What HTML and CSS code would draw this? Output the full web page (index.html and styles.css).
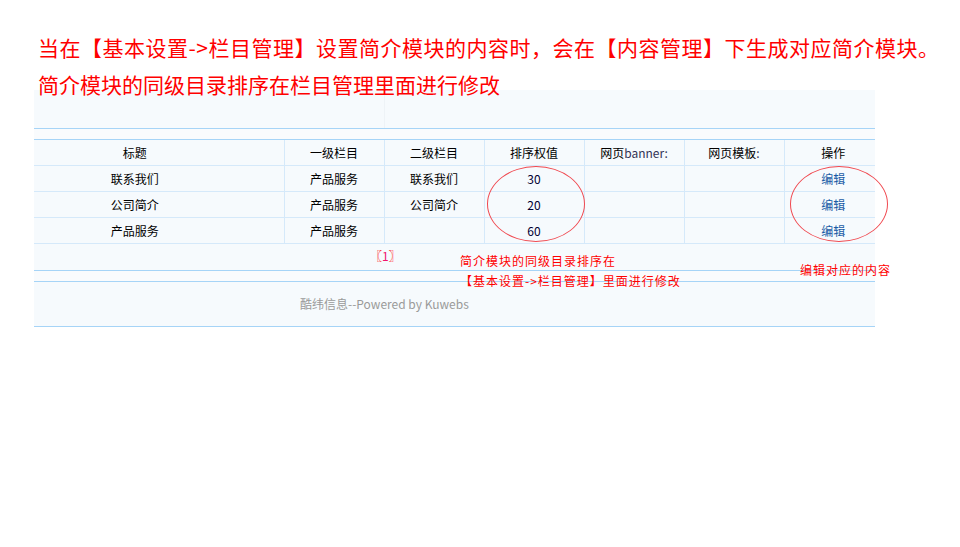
FILE: index.html
```html
<!DOCTYPE html>
<html lang="zh-CN">
<head>
<meta charset="utf-8">
<title>简介模块</title>
<link rel="stylesheet" href="styles.css">
</head>
<body>
<div class="note">
  <p>当在【基本设置-&gt;栏目管理】设置简介模块的内容时，会在【内容管理】下生成对应简介模块。</p>
  <p>简介模块的同级目录排序在栏目管理里面进行修改</p>
</div>

<div class="panel">
  <div class="panel-top">
    <div class="pt-left"></div>
    <div class="pt-right"></div>
  </div>
  <div class="gap"></div>
  <table class="grid">
    <colgroup>
      <col style="width:250px"><col style="width:100px"><col style="width:100px"><col style="width:100px"><col style="width:100px"><col style="width:100px"><col style="width:91px">
    </colgroup>
    <tr class="head">
      <td>标题</td><td>一级栏目</td><td>二级栏目</td><td>排序权值</td><td>网页<span class="en">banner:</span></td><td>网页模板<span class="en">:</span></td><td>操作</td>
    </tr>
    <tr>
      <td>联系我们</td><td>产品服务</td><td>联系我们</td><td class="num">30</td><td></td><td></td><td><a class="edit" href="#">编辑</a></td>
    </tr>
    <tr>
      <td>公司简介</td><td>产品服务</td><td>公司简介</td><td class="num">20</td><td></td><td></td><td><a class="edit" href="#">编辑</a></td>
    </tr>
    <tr>
      <td>产品服务</td><td>产品服务</td><td></td><td class="num">60</td><td></td><td></td><td><a class="edit" href="#">编辑</a></td>
    </tr>
    <tr class="pager">
      <td colspan="7"><span class="pg"><span class="br">〖</span>1<span class="br">〗</span></span></td>
    </tr>
  </table>
  <div class="gap"></div>
  <div class="footer">酷纬信息--Powered by Kuwebs</div>

  <span class="ring ring-sort"></span>
  <span class="ring ring-edit"></span>
  <div class="tip tip-sort">简介模块的同级目录排序在<br>【基本设置-&gt;栏目管理】里面进行修改</div>
  <div class="tip tip-edit">编辑对应的内容</div>
</div>
</body>
</html>
```

FILE: styles.css
```css
html, body {
  margin: 0;
  padding: 0;
  background: #fff;
}

body {
  font-family: "Noto Sans CJK SC", "DejaVu Sans", sans-serif;
  font-size: 12px;
  color: #000;
}

/* red note above the panel */
.note {
  position: relative;
  z-index: 2;
  height: 90px;
  padding: 29px 0 0 38px;
  box-sizing: border-box;
  color: #f00;
  font-size: 21px;
  line-height: 37px;
}

.note p {
  margin: 0;
  white-space: nowrap;
}

.note p:first-child {
  letter-spacing: 0.5px;
}

/* admin panel */
.panel {
  position: relative;
  width: 841px;
  margin-left: 34px;
  background: #f6fafd;
}

.panel-top {
  display: flex;
  height: 38px;
  border-bottom: 1px solid #a6d4f7;
}

.pt-left {
  width: 350px;
  border-right: 1px solid #eef3f7;
}

.pt-right {
  flex: 1;
}

.gap {
  height: 10px;
  border-bottom: 1px solid #a6d4f7;
  background: #f9fbfd;
}

.grid {
  width: 841px;
  border-collapse: collapse;
  table-layout: fixed;
}

.grid td {
  height: 25px;
  padding: 0;
  text-align: center;
  border-right: 1px solid #d5e9fa;
  border-bottom: 1px solid #d5e9fa;
  white-space: nowrap;
}

.grid td:first-child {
  padding-right: 48px;
}

.grid td:last-child {
  border-right: 0;
  padding-left: 7px;
}

.grid .en {
  color: #333355;
}

.grid .num {
  color: #000033;
}

.edit {
  color: #1a5ca6;
  text-decoration: none;
}

.pager td {
  height: 26px;
  border-right: 0;
  border-bottom: 1px solid #a6d4f7;
  text-align: left;
  vertical-align: top;
}

.grid .pager td {
  padding: 0;
}

.pg {
  display: inline-block;
  margin: 4px 0 0 336px;
  color: #f0136c;
  line-height: 16px;
}

.pg .br {
  color: #f00;
  font-weight: bold;
}

.footer {
  height: 44px;
  line-height: 44px;
  padding-left: 266px;
  color: #9a9a9a;
  border-bottom: 1px solid #a6d4f7;
}

/* red highlight rings and callouts */
.ring {
  position: absolute;
  width: 96px;
  height: 74px;
  border: 1.5px solid #f0484f;
  border-radius: 50%;
}

.ring-sort {
  left: 453px;
  top: 76px;
}

.ring-edit {
  left: 756px;
  top: 76px;
}

.tip {
  position: absolute;
  color: #f00;
  font-size: 12px;
  line-height: 20px;
  letter-spacing: 1px;
  white-space: nowrap;
}

.tip-sort {
  left: 426px;
  top: 161px;
}

.tip-edit {
  left: 766px;
  top: 170px;
}
```
